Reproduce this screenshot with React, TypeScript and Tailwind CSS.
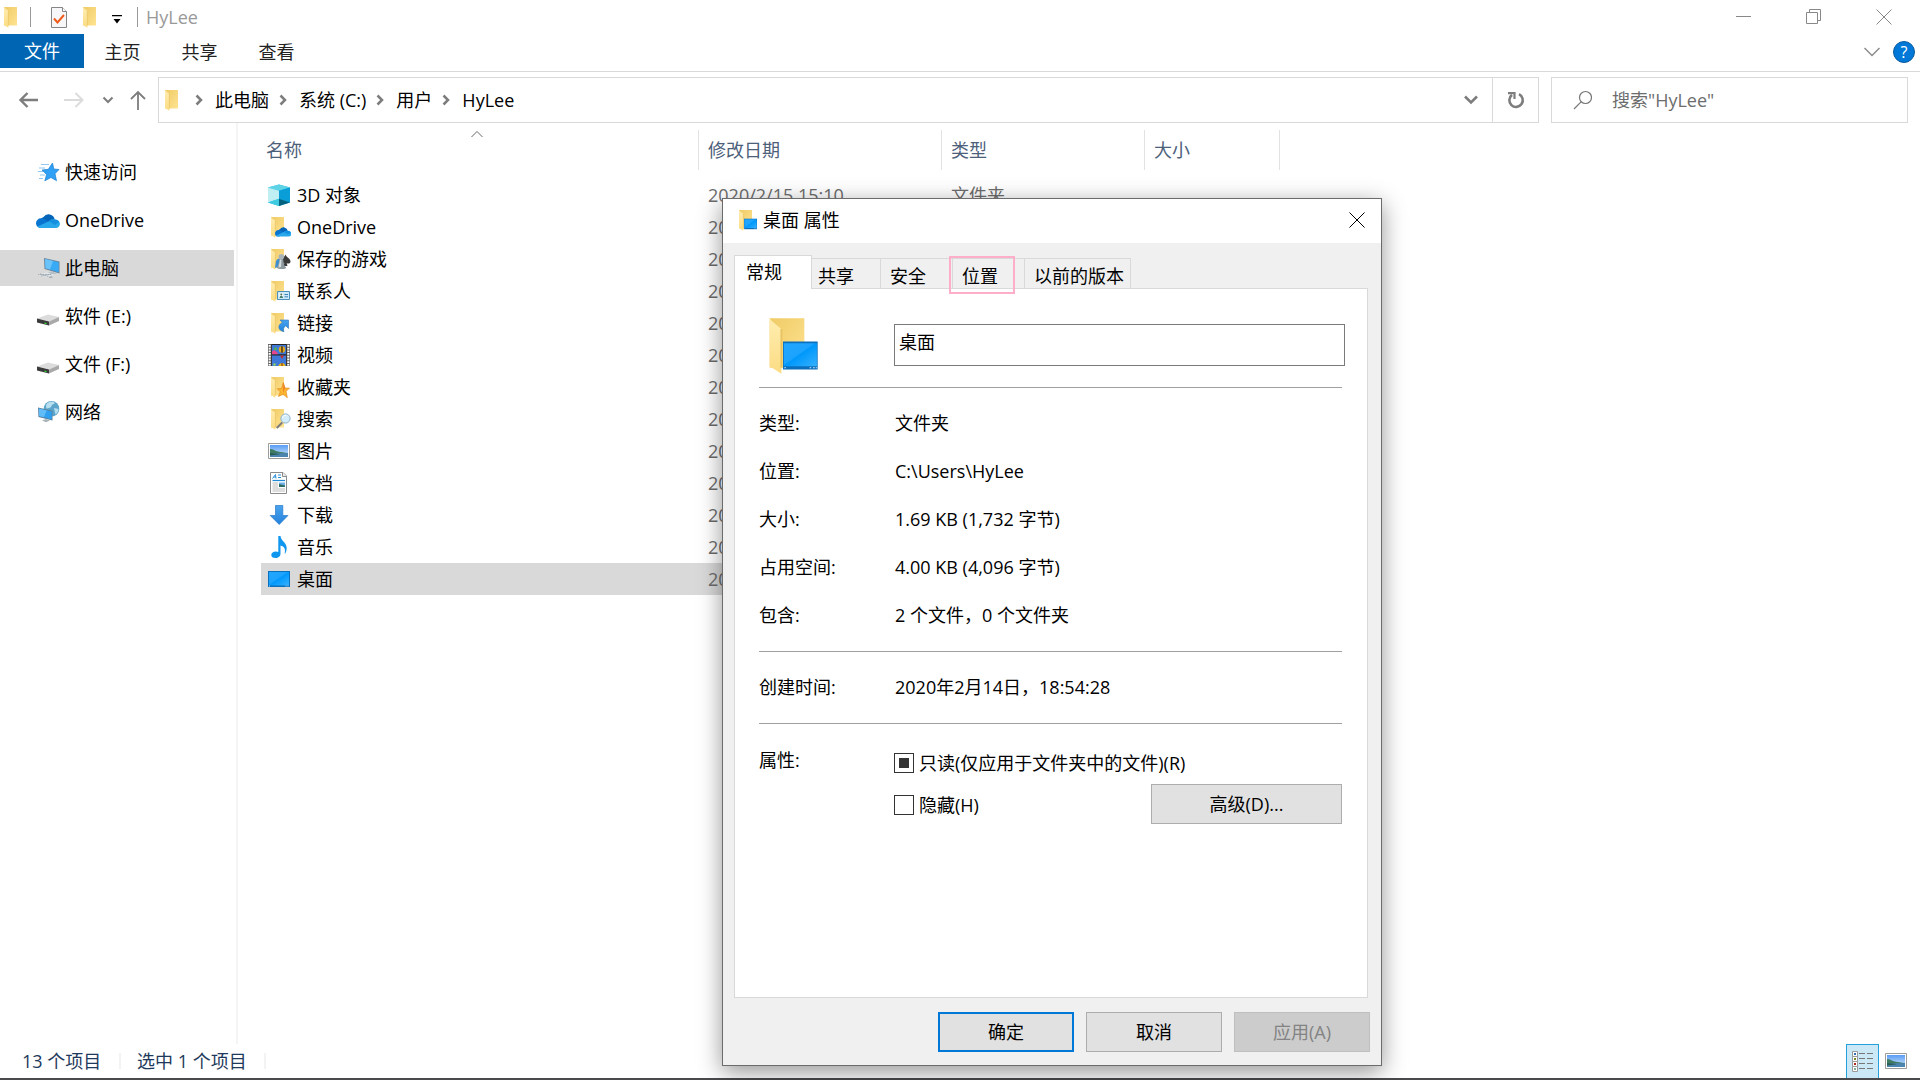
import { useEffect, useRef, type ReactNode } from "react";
import clsx from "clsx";

/* ---------- shared svg pieces ---------- */

function Gradients() {
    return (
        <svg width="0" height="0" className="absolute" aria-hidden="true">
            <defs>
                <linearGradient id="folderBack" x1="0" y1="0" x2="1" y2="1">
                    <stop offset="0" stopColor="#efcb66" />
                    <stop offset="1" stopColor="#ffe391" />
                </linearGradient>
                <linearGradient id="folderFlap" x1="0" y1="0" x2="0" y2="1">
                    <stop offset="0" stopColor="#ffedb0" />
                    <stop offset="1" stopColor="#fbdc83" />
                </linearGradient>
                <linearGradient id="screen" x1="0" y1="0" x2="1" y2="1">
                    <stop offset="0" stopColor="#23a7ff" />
                    <stop offset="0.45" stopColor="#1ca3fd" />
                    <stop offset="0.5" stopColor="#0098fb" />
                    <stop offset="1" stopColor="#35b1ff" />
                </linearGradient>
                <linearGradient id="sky" x1="0" y1="0" x2="0" y2="1">
                    <stop offset="0" stopColor="#5a9cf5" />
                    <stop offset="1" stopColor="#d4e9fb" />
                </linearGradient>
                <linearGradient id="arrowBlue" x1="0" y1="0" x2="0" y2="1">
                    <stop offset="0" stopColor="#4aa3ee" />
                    <stop offset="1" stopColor="#2382dc" />
                </linearGradient>
            </defs>
        </svg>
    );
}

function Svg({ children, className = "size-6" }: { children: ReactNode; className?: string }) {
    return (
        <svg viewBox="0 0 24 24" className={clsx("shrink-0", className)} aria-hidden="true">
            {children}
        </svg>
    );
}

function FolderShape() {
    return (
        <>
            <path d="M4 2h13v18.5H4z" fill="url(#folderBack)" />
            <path d="M4 2l1 1.2L8.4 6v16.8L4 20z" fill="url(#folderFlap)" />
            <path d="M8.4 6v14.5" stroke="#e9c362" strokeWidth="0.7" />
        </>
    );
}

function CloudShape() {
    return (
        <>
            <path d="M7.5 9a6.2 6.2 0 0 1 11.2 2.500L12 16 5 10.500z" fill="#0364b8" />
            <path d="M0 15.500a5 5 0 0 1 5.300-5.200c1.600 0 2.600.5 3.400 1L15 15l-9 5H5a4.700 4.700 0 0 1-5-4.500z" fill="#0a74d1" />
            <path d="M13 13.200c1.500-1.500 3.500-2.200 5.700-1.700A4.900 4.900 0 0 1 24 15.800 4.200 4.200 0 0 1 19.800 20H5c-1.500 0-2.700-.6-3.600-1.500z" fill="#28a8ea" />
            <path d="M13 13.200c1.500-1.500 3.500-2.200 5.700-1.700 1.800.2 3.500 1.100 4.500 2.500L19 17z" fill="#1490df" />
        </>
    );
}

function DesktopShape() {
    return (
        <>
            <path d="M1 4h22v16H1z" fill="#0a6fbd" />
            <path d="M2 5h20v13.500H2z" fill="url(#screen)" />
            <path d="M2 19h1M18.500 19h1M20.500 19h1" stroke="#cfe9ff" strokeWidth="0.8" />
        </>
    );
}

function PictureShape() {
    return (
        <>
            <path d="M1.500 4.500h21v15h-21z" fill="#fff" stroke="#9c9c9c" />
            <path d="M3 6h18v12H3z" fill="url(#sky)" />
            <path d="M3 10c3 0 5 2 8 2.500s6 1 10 1.500v1H3z" fill="#3f7a63" />
            <path d="M3 14.200h18V18H3z" fill="#4c86b0" />
            <path d="M3 14c4 .2 7 .8 10 1.200L3 16.500z" fill="#2b5c53" />
        </>
    );
}

function FolderIcon({ className }: { className?: string }) {
    return (
        <Svg className={className}>
            <FolderShape />
        </Svg>
    );
}

function DesktopFolderIcon({ className }: { className?: string }) {
    return (
        <Svg className={className}>
            <FolderShape />
            <path d="M9 10.700h13v10.500H9z" fill="#0a6fbd" />
            <path d="M9.300 11.300h12.400v8.700H9.300z" fill="url(#screen)" />
            <path d="M9.500 20.500h.6M19 20.500h.6M20.300 20.500h.6M21.300 20.500h.4" stroke="#cfe9ff" strokeWidth="0.4" />
        </Svg>
    );
}

const icons: Record<string, ReactNode> = {
    cube: (
        <Svg>
            <path d="M12 1.500l11 3v15l-11 3.500-11-3.500v-15z" fill="#19b9dc" />
            <path d="M1 4.500l11-3 11 3-11 3.300z" fill="#5fd3e6" />
            <path d="M1 4.500l11 3.300v8L1 19.500z" fill="#bfeef3" />
            <path d="M12 7.800l11-3.300v15l-11-3.700z" fill="#0a9ed8" />
            <path d="M1 19.500l11-3.700V23z" fill="#3fcbe0" />
            <path d="M12 15.800l11 3.700L12 23z" fill="#04627f" />
        </Svg>
    ),
    onedriveFolder: (
        <Svg>
            <FolderShape />
            <g transform="translate(8 8) scale(.68)">
                <CloudShape />
            </g>
        </Svg>
    ),
    games: (
        <Svg>
            <FolderShape />
            <path d="M9 14c1-2 3-3 4-2l-2 8-3 1z" fill="#3d8fd1" />
            <path d="M18.500 7.500c1 3 5 4 5 7 0 2-2.300 2.600-3.800 1.500l.8 3h-4l.8-3c-1.500 1.100-3.800.5-3.800-1.500 0-3 4-4 5-7z" fill="#3b3b3b" />
            <circle cx="14.300" cy="9.800" r="2.800" fill="#aab4b8" />
            <path d="M12.500 12h3.600l1 6 2 2.500c.5 2-8.500 2-9.500 0l2-2.500z" fill="#8c999f" />
            <path d="M13 12.500h1.500l-.5 7.500-2.500.5z" fill="#d5dcdf" />
        </Svg>
    ),
    contacts: (
        <Svg>
            <FolderShape />
            <path d="M10.500 12.500h12v8h-12z" fill="#cdeafa" stroke="#4a90bd" />
            <path d="M12.500 14.500h3.500v4.500h-3.500z" fill="#fff" />
            <circle cx="14.300" cy="15.600" r="1" fill="#4b6b5d" />
            <path d="M12.600 19c0-3 3.400-3 3.400 0z" fill="#3f7f6a" />
            <path d="M17.500 15.500H21M17.500 17.800H21" stroke="#3c83b5" />
        </Svg>
    ),
    links: (
        <Svg>
            <FolderShape />
            <path d="M13 9h8.500v8.500l-2.800-2.800c-2.300 1.800-2.700 3.800-1.700 6-3.800-.7-6-3.200-4.800-6.200.6-1.500 2-2.400 3.300-3z" fill="url(#arrowBlue)" stroke="#2a74bd" strokeWidth="0.6" />
        </Svg>
    ),
    video: (
        <Svg>
            <path d="M1 1h22v22H1z" fill="#6a6a6a" />
            <path d="M2.700 2v21M21.300 2v21" stroke="#fff" strokeWidth="2" strokeDasharray="1.700 1" />
            <path d="M4.300 1h15.400v22H4.300z" fill="#252525" />
            <path d="M5 2h14v9.300H5zM5 12.500h14V23H5z" fill="#3e78d8" />
            <circle cx="15" cy="6.500" r="3.200" fill="#e2a91d" />
            <path d="M14.300 3.300h1.400v6.400h-1.400z" fill="#3d2a1b" />
            <path d="M5 8.500l2-1.500 3 2 1 2.300H5z" fill="#e5468d" />
            <circle cx="8.500" cy="5.800" r="1.500" fill="#55b04d" />
            <path d="M13 12.500h4l-2 3.500z" fill="#c22f2a" />
            <path d="M11.500 23c.5-4 6.500-4 7 0z" fill="#e7b71c" />
            <path d="M14.500 20h1v3h-1z" fill="#7a241d" />
            <circle cx="7.500" cy="21.500" r="1.300" fill="#8fcf5a" />
        </Svg>
    ),
    favorites: (
        <Svg>
            <FolderShape />
            <path d="M16.300 7.500l1.700 5.500 4.500.2-3.500 3 1.300 6.500-4.300-3.700-4.500 2.500 1.800-4.700-3-3 4.200-.3z" fill="#fdb62f" stroke="#e08a1b" strokeWidth="0.7" />
            <path d="M16.300 7.500l1.700 5.500-2 5.500z" fill="#f07f2a" />
        </Svg>
    ),
    search: (
        <Svg>
            <FolderShape />
            <path d="M15.200 15.500l-5.500 5.500" stroke="#7d7d7d" strokeWidth="2" />
            <circle cx="18.500" cy="11.500" r="4.600" fill="#d3ecfb" stroke="#8fb3cc" />
            <path d="M15.500 11a3.200 3.200 0 0 1 4-2.500" stroke="#fff" fill="none" />
        </Svg>
    ),
    pictures: (
        <Svg>
            <PictureShape />
        </Svg>
    ),
    documents: (
        <Svg>
            <path d="M3.500 1.500h12.500l3.500 3.500v17.500h-16z" fill="#fff" stroke="#8a8a8a" />
            <path d="M15.500 1.500V5.500h4" fill="#eee" stroke="#8a8a8a" />
            <path d="M5.500 7.500l3-4 .5 4M6.500 6h2.500M11 4h3M11 6.500h3" stroke="#2b8fd8" fill="none" />
            <path d="M5.500 9.500h12.500" stroke="#1e88d6" strokeWidth="1.200" />
            <path d="M5.500 12h5.500M5.500 14h5.500M5.500 16h5.500M5.500 18h12.500M5.500 20h12.500" stroke="#a9a9a9" strokeWidth="0.800" />
            <path d="M12 11.500h6v4.500h-6z" fill="#6fb1e6" />
            <path d="M12 13l3 .8 3 .7V16h-6z" fill="#2f6b63" />
        </Svg>
    ),
    download: (
        <Svg>
            <path d="M8.500 2.500h7.300v10H21L12.200 21.500 3.200 12.500h5.300z" fill="url(#arrowBlue)" stroke="#2679c8" strokeWidth="0.700" />
        </Svg>
    ),
    music: (
        <Svg>
            <path d="M11.300 1h2.200c.3 3 2 4.300 3.900 6.500 2.600 3 3.100 6.700 1 10.800-.3.500-.9.300-.7-.3 1-3.700-.3-6.500-4.200-7.500v8.200c0 2.600-2.200 4.300-5 4.300-2.700 0-4.200-1.300-4.200-3 0-2 2-3.500 4.500-3.500 1 0 1.800.2 2.500.5z" fill="#0f96ee" />
        </Svg>
    ),
    desktop: (
        <Svg>
            <DesktopShape />
        </Svg>
    ),
    quick: (
        <Svg>
            <path d="M5 4.500h8M3 8h6M2 11.500h5M4 15h5M3 18.500h4" stroke="#8fc7f2" strokeWidth="1" />
            <path d="M16.500 3l1.300 6 5.200.5-4 4.200 1.500 7-5.500-3.200-6.200 3.300 1.800-6.300L6 10l6.300-.7z" fill="#2ea0f5" stroke="#1c7fd0" strokeWidth="0.700" />
        </Svg>
    ),
    onedrive: (
        <Svg>
            <CloudShape />
        </Svg>
    ),
    pc: (
        <Svg>
            <path d="M8 2l15.500 3.500v12L8.500 13z" fill="#68849a" />
            <path d="M9 3l13.700 3.200v10L9.500 12.200z" fill="#39aaf6" />
            <path d="M9 3l8 1.900-3 8.600-4.500-1.300z" fill="#6cc3fa" />
            <path d="M12 16.500l4-1 5 1.800-4 1.200z" fill="#b5bfc6" />
            <path d="M1 18.500l10-2 8 2.500-8 2.500z" fill="#dfe4e8" />
            <path d="M2 18.500l13 0M5 20l11-2M4 17.800l9 3" stroke="#8d99a2" strokeWidth="0.700" strokeDasharray="1.500 .8" />
            <path d="M12.500 21l3-.8 1.500 1-3 .8z" fill="#97a4ad" />
        </Svg>
    ),
    drive: (
        <Svg>
            <path d="M1 14.500L12 10.500l11 2.500-10 4.500z" fill="#dcdcdc" />
            <path d="M1 14.500L13 17.500v4L1 18.500z" fill="#3a3a3a" />
            <path d="M13 17.500l10-4.500v4L13 21.500z" fill="#a9a9a9" />
            <path d="M8.500 18.500l2 .5v1.200l-2-.5z" fill="#35d335" />
        </Svg>
    ),
    network: (
        <Svg>
            <circle cx="15.500" cy="8.800" r="7.800" fill="#5ba5cb" />
            <path d="M11 3.500c2-2 6-2.500 8-.5-1 1.500-3 1-3.500 3s-3 2-5 2.500c-.8-2-.5-3.800.5-5zM18 8l4.500 1c0 2-1 4-3 5.500z" fill="#b7dff0" />
            <path d="M2 7.500l14.500 3.300v9.700L2.500 17z" fill="#5c7f98" />
            <path d="M2.800 8.500l13 3v8L3.200 16z" fill="#2f9fee" />
            <path d="M2.800 8.500l8 1.900-3 6.800L3.200 16z" fill="#62bcf8" />
            <path d="M6 20.500l4-1.500 4 1.500-4 1.800z" fill="#a8b3ba" />
        </Svg>
    ),
};

function Chevron({ dir, className }: { dir: "down" | "right"; className?: string }) {
    return (
        <svg viewBox="0 0 12 12" className={clsx("size-3 shrink-0", className)} fill="none" stroke="currentColor" aria-hidden="true">
            <path d={dir === "down" ? "M1.500 3.500L6 8l4.500-4.500" : "M3.500 1.500L8 6l-4.500 4.500"} />
        </svg>
    );
}

/* ---------- data ---------- */

const places = [
    { icon: "quick", label: "快速访问" },
    { icon: "onedrive", label: "OneDrive" },
    { icon: "pc", label: "此电脑", active: true },
    { icon: "drive", label: "软件 (E:)" },
    { icon: "drive", label: "文件 (F:)" },
    { icon: "network", label: "网络" },
];

const files = [
    { icon: "cube", name: "3D 对象", date: "2020/2/15 15:10", type: "文件夹" },
    { icon: "onedriveFolder", name: "OneDrive", date: "2020" },
    { icon: "games", name: "保存的游戏", date: "2020" },
    { icon: "contacts", name: "联系人", date: "2020" },
    { icon: "links", name: "链接", date: "2020" },
    { icon: "video", name: "视频", date: "2020" },
    { icon: "favorites", name: "收藏夹", date: "2020" },
    { icon: "search", name: "搜索", date: "2020" },
    { icon: "pictures", name: "图片", date: "2020" },
    { icon: "documents", name: "文档", date: "2020" },
    { icon: "download", name: "下载", date: "2020" },
    { icon: "music", name: "音乐", date: "2020" },
    { icon: "desktop", name: "桌面", date: "2020", selected: true },
];

const details = [
    ["类型:", "文件夹"],
    ["位置:", "C:\\Users\\HyLee"],
    ["大小:", "1.69 KB (1,732 字节)"],
    ["占用空间:", "4.00 KB (4,096 字节)"],
    ["包含:", "2 个文件，0 个文件夹"],
];

/* ---------- explorer window ---------- */

function TitleBar() {
    return (
        <header className="flex h-[34px] items-center text-[#999]">
            <FolderIcon className="size-6" />
            <span className="ml-1.5 h-5 w-px bg-[#999]" />
            <button aria-label="属性" className="ml-4 flex size-6 items-center justify-center">
                <svg viewBox="0 0 18 24" className="h-6" aria-hidden="true">
                    <path d="M1.500 2.500h11l4 4v16h-15z" fill="#f7f7f9" stroke="#858585" />
                    <path d="M12.500 2.500v4h4" fill="#fff" stroke="#858585" />
                    <path d="M4 13.500l3.500 4L14 10" fill="none" stroke="#f05a1a" strokeWidth="2" />
                </svg>
            </button>
            <button aria-label="新建文件夹" className="ml-2 flex size-6">
                <FolderIcon />
            </button>
            <button aria-label="自定义快速访问工具栏" className="ml-1.5 flex size-4 items-center justify-center pt-1">
                <svg viewBox="0 0 10 9" className="w-[10px]" aria-hidden="true">
                    <path d="M0 0h10v1.300H0zM1.500 4h7L5 8.500z" fill="#000" />
                </svg>
            </button>
            <span className="ml-3 h-5 w-px bg-[#999]" />
            <h1 className="ml-2 text-lg leading-6">HyLee</h1>
            <div className="ml-auto flex items-center gap-[54px] pr-7 text-[#888]">
                <button aria-label="最小化">
                    <svg viewBox="0 0 16 16" className="size-4" stroke="currentColor">
                        <path d="M0 7.500h15" />
                    </svg>
                </button>
                <button aria-label="还原">
                    <svg viewBox="0 0 16 16" className="size-4" stroke="currentColor" fill="none">
                        <path d="M.5 3.500h11v11H.5zM3.500 3.500v-3h11v11h-3" />
                    </svg>
                </button>
                <button aria-label="关闭">
                    <svg viewBox="0 0 16 16" className="size-4" stroke="currentColor">
                        <path d="M.5.5l15 15M15.500.5l-15 15" />
                    </svg>
                </button>
            </div>
        </header>
    );
}

function Ribbon() {
    return (
        <nav className="flex h-[38px] items-start border-b border-[#d9d9d9] text-lg text-[#222]">
            <button className="h-[34px] w-[84px] bg-[#0066b4] text-white">文件</button>
            {["主页", "共享", "查看"].map((tab) => (
                <button key={tab} className="h-9 w-[77px]">
                    {tab}
                </button>
            ))}
            <div className="ml-auto flex h-9 items-center gap-3 pr-[5px]">
                <button aria-label="展开功能区" className="text-[#8c8c8c]">
                    <svg viewBox="0 0 18 10" className="w-[18px]" fill="none" stroke="currentColor" strokeWidth="1.500">
                        <path d="M1.500 1L9 8.500 16.500 1" />
                    </svg>
                </button>
                <button
                    aria-label="帮助"
                    className="flex size-[22px] items-center justify-center rounded-full border border-[#0a5a9f] bg-[#0078d7] text-base leading-5 text-white"
                >
                    ?
                </button>
            </div>
        </nav>
    );
}

function AddressBar() {
    return (
        <div className="flex h-[51px] items-end">
            <div className="flex h-[46px] w-[158px] shrink-0 items-center text-[#7d7d7d]">
                <button aria-label="后退" className="ml-[18px]">
                    <svg viewBox="0 0 20 20" className="size-5" fill="none" stroke="currentColor" strokeWidth="2.400">
                        <path d="M20 10H3M9.500 3L2.500 10l7 7" />
                    </svg>
                </button>
                <button aria-label="前进" className="ml-[26px] text-[#dcdcdc]" disabled>
                    <svg viewBox="0 0 20 20" className="size-5" fill="none" stroke="currentColor" strokeWidth="2">
                        <path d="M0 10h18M11.500 3l7 7-7 7" />
                    </svg>
                </button>
                <button aria-label="最近浏览的位置" className="ml-[18px]">
                    <Chevron dir="down" className="stroke-2" />
                </button>
                <button aria-label="上移" className="ml-[14px]">
                    <svg viewBox="0 0 20 20" className="size-5" fill="none" stroke="currentColor" strokeWidth="1.800">
                        <path d="M10 20V2M3 9L10 2l7 7" />
                    </svg>
                </button>
            </div>
            <div className="flex h-[46px] flex-1 items-center border border-[#d9d9d9] text-lg text-black">
                <FolderIcon className="ml-0.5 size-6" />
                {["此电脑", "系统 (C:)", "用户", "HyLee"].map((crumb) => (
                    <span key={crumb} className="flex items-center">
                        <Chevron dir="right" className="mr-2.5 ml-2 stroke-[2.5] text-[#7d7d7d]" />
                        <a href="#" className="leading-6">
                            {crumb}
                        </a>
                    </span>
                ))}
                <button aria-label="以前的位置" className="mr-[14px] ml-auto text-[#7d7d7d]">
                    <svg viewBox="0 0 14 10" className="w-[14px]" fill="none" stroke="currentColor" strokeWidth="2.600">
                        <path d="M1 1.500l6 6 6-6" />
                    </svg>
                </button>
                <button aria-label="刷新" className="flex h-full w-[46px] items-center justify-center border-l border-[#d9d9d9] text-[#7d7d7d]">
                    <svg viewBox="0 0 18 18" className="size-[18px]" fill="none" stroke="currentColor" strokeWidth="2.600">
                        <path d="M12 3.200a6.700 6.700 0 1 1-7 .7" />
                        <path d="M1 2.200h6.500V8" strokeWidth="2.200" />
                    </svg>
                </button>
            </div>
            <label className="mr-3 ml-3 flex h-[46px] w-[357px] items-center border border-[#d9d9d9] pl-5 text-lg">
                <svg viewBox="0 0 20 20" className="size-5 shrink-0 text-[#777]" fill="none" stroke="currentColor" strokeWidth="1.200">
                    <circle cx="13.500" cy="7.500" r="6" />
                    <path d="M9.300 11.700L2 19" />
                </svg>
                <input
                    type="search"
                    aria-label="搜索"
                    placeholder={'搜索"HyLee"'}
                    className="ml-5 w-full min-w-0 bg-transparent outline-none placeholder:text-[#6d6d6d]"
                />
            </label>
        </div>
    );
}

function Sidebar() {
    return (
        <nav className="w-[238px] shrink-0 border-r-2 border-[#f5f5f5] pt-[31px]">
            <ul className="flex flex-col gap-3">
                {places.map((place) => (
                    <li key={place.label}>
                        <a
                            href="#"
                            className={clsx(
                                "mr-0.5 flex h-9 items-center gap-[5px] pl-9 text-lg text-black",
                                place.active && "bg-[#d9d9d9]"
                            )}
                        >
                            {icons[place.icon]}
                            {place.label}
                        </a>
                    </li>
                ))}
            </ul>
        </nav>
    );
}

function FileTable() {
    const head = "h-10 border-r border-[#e2e2e2] pl-[9px] text-left font-normal text-[#4c607a]";
    return (
        <main className="flex-1 pt-[7px] pl-[23px]">
            <table className="table-fixed border-separate border-spacing-0 text-lg leading-6">
                <colgroup>
                    <col className="w-[438px]" />
                    <col className="w-[243px]" />
                    <col className="w-[203px]" />
                    <col className="w-[135px]" />
                </colgroup>
                <thead>
                    <tr>
                        <th className={clsx(head, "relative")}>
                            <svg viewBox="0 0 12 8" className="absolute top-0 left-[210px] w-3" fill="none" stroke="#666">
                                <path d="M.5 7L6 1.500 11.500 7" />
                            </svg>
                            <span className="-ml-1">名称</span>
                        </th>
                        <th className={head}>修改日期</th>
                        <th className={head}>类型</th>
                        <th className={head}>大小</th>
                    </tr>
                </thead>
                <tbody className="before:block before:h-[9px]">
                    {files.map((file) => (
                        <tr key={file.name} className={clsx("text-[#6d6d6d]", file.selected && "bg-[#d9d9d9]")}>
                            <td className="h-8 pl-1.5 text-black">
                                <div className="flex items-center gap-[6px]">
                                    {icons[file.icon]}
                                    {file.name}
                                </div>
                            </td>
                            <td className="pl-[9px]">{file.date}</td>
                            <td className="pl-[9px]">{file.type}</td>
                            <td />
                        </tr>
                    ))}
                </tbody>
            </table>
        </main>
    );
}

function StatusBar() {
    return (
        <footer className="flex h-9 items-center border-b-2 border-[#4a4a4d] pl-[22px] text-lg leading-6 text-[#1e395b]">
            <span className="w-[97px]">13 个项目</span>
            <span className="mr-4 h-4 w-0.5 bg-[#f3f3f3]" />
            <span className="w-[127px]">选中 1 个项目</span>
            <span className="h-4 w-0.5 bg-[#f3f3f3]" />
            <div className="ml-auto flex h-full items-center gap-[5px] pr-3">
                <button aria-label="详细信息" className="flex h-full w-[33px] items-center justify-center border border-b-0 border-[#26a0da] bg-[#cbe8f6]">
                    <svg viewBox="0 0 22 22" className="size-[22px]">
                        {[0.5, 5.5, 10.5, 15.5].map((y, i) => (
                            <g key={y}>
                                <path d={`M.5 ${y}h5v5h-5z`} fill="#fff" stroke="#9a9a9a" />
                                <path d={`M2 ${y + 1.5}h2v2H2z`} fill={["#2f6fb5", "#7d8a2b", "#b52a1f", "#7fae9a"][i]} />
                                <path d={`M7 ${y + 2}h6M15 ${y + 2}h6`} stroke="#777" />
                            </g>
                        ))}
                    </svg>
                </button>
                <button aria-label="大缩略图">
                    <Svg>
                        <PictureShape />
                    </Svg>
                </button>
            </div>
        </footer>
    );
}

/* ---------- properties dialog ---------- */

function CheckBox({ id, label, mixed = false }: { id: string; label: string; mixed?: boolean }) {
    const ref = useRef<HTMLInputElement>(null);

    useEffect(() => {
        if (ref.current) ref.current.indeterminate = mixed;
    }, [mixed]);

    return (
        <div className="flex h-[42px] items-center gap-[5px]">
            <input
                ref={ref}
                id={id}
                type="checkbox"
                className="grid size-5 appearance-none place-items-center border border-[#333] bg-white before:size-[10px] before:content-[''] checked:before:bg-[#333] indeterminate:before:bg-[#333]"
            />
            <label htmlFor={id}>{label}</label>
        </div>
    );
}

function Tabs() {
    const tab = "relative h-[30px] border-t border-r border-[#d9d9d9] pt-1 text-left";
    return (
        <div role="tablist" className="flex h-[33px] items-end">
            <button role="tab" aria-selected="true" className="relative z-10 -mb-px h-[34px] w-[78px] border border-b-0 border-[#d9d9d9] bg-white pb-0.5 pl-[11px] text-left">
                常规
            </button>
            <button role="tab" className={clsx(tab, "w-[69px] pl-1.5")}>
                共享
            </button>
            <button role="tab" className={clsx(tab, "w-[72px] pl-[9px]")}>
                安全
            </button>
            <button role="tab" className={clsx(tab, "w-[72px] pl-[9px]")}>
                位置
                <span className="absolute -top-[3px] -left-[4px] h-[38px] w-[66px] border-2 border-[#ffaec9]" />
            </button>
            <button role="tab" className={clsx(tab, "w-[106px] pl-[9px]")}>
                以前的版本
            </button>
        </div>
    );
}

function PropertiesDialog() {
    const button = "h-10 border border-[#adadad] bg-[#e1e1e1]";
    return (
        <section
            role="dialog"
            aria-labelledby="dialog-title"
            className="absolute top-[198px] left-[722px] z-20 flex h-[868px] w-[660px] flex-col border border-[#6b6b6b] bg-[#f0f0f0] text-lg leading-6 text-black shadow-[0_6px_22px_rgba(0,0,0,0.42)]"
        >
            <div className="flex h-11 shrink-0 items-center bg-white pr-4 pb-0.5 pl-3">
                <DesktopFolderIcon className="size-6" />
                <h2 id="dialog-title" className="ml-1">
                    桌面 属性
                </h2>
                <button aria-label="关闭" className="ml-auto">
                    <svg viewBox="0 0 16 16" className="size-4" stroke="#000">
                        <path d="M.5.5l15 15M15.500.5l-15 15" />
                    </svg>
                </button>
            </div>
            <div className="flex flex-1 flex-col pt-3 pr-[11px] pb-[13px] pl-[11px]">
                <Tabs />
                <div className="mr-0.5 flex-1 border border-[#d9d9d9] bg-white pr-[25px] pl-6">
                    <div className="flex h-[98px] items-center pt-[14px]">
                        <div className="w-[135px]">
                            <DesktopFolderIcon className="size-16" />
                        </div>
                        <input
                            aria-label="名称"
                            defaultValue="桌面"
                            className="-mr-[3px] h-[42px] flex-1 border border-[#7a7a7a] pb-2 pl-1"
                        />
                    </div>
                    <hr className="border-[#a0a0a0]" />
                    <dl className="pt-[11px] pb-3">
                        {details.map(([term, value]) => (
                            <div key={term} className="flex h-12 items-center">
                                <dt className="w-[136px]">{term}</dt>
                                <dd>{value}</dd>
                            </div>
                        ))}
                    </dl>
                    <hr className="border-[#a0a0a0]" />
                    <dl className="pt-[11px] pb-3">
                        <div className="flex h-12 items-center">
                            <dt className="w-[136px]">创建时间:</dt>
                            <dd>2020年2月14日，18:54:28</dd>
                        </div>
                    </dl>
                    <hr className="border-[#a0a0a0]" />
                    <div className="flex pt-[18px]">
                        <span className="w-[135px] pt-1.5">属性:</span>
                        <div className="flex-1">
                            <CheckBox id="readonly" label="只读(仅应用于文件夹中的文件)(R)" mixed />
                            <div className="flex justify-between">
                                <CheckBox id="hidden" label="隐藏(H)" />
                                <button className={clsx(button, "w-[191px]")}>高级(D)...</button>
                            </div>
                        </div>
                    </div>
                </div>
                <div className="mt-[14px] flex justify-end gap-3">
                    <button className="h-10 w-[136px] border-2 border-[#0078d7] bg-[#e1e1e1]">确定</button>
                    <button className={clsx(button, "w-[136px]")}>取消</button>
                    <button disabled className="h-10 w-[136px] border border-[#bfbfbf] bg-[#cccccc] text-[#838383]">
                        应用(A)
                    </button>
                </div>
            </div>
        </section>
    );
}

export default function App() {
    return (
        <div className="relative flex min-h-screen flex-col overflow-hidden bg-white font-['Open_Sans','Noto_Sans_CJK_SC',sans-serif]">
            <Gradients />
            <TitleBar />
            <Ribbon />
            <AddressBar />
            <div className="flex flex-1">
                <Sidebar />
                <FileTable />
            </div>
            <StatusBar />
            <PropertiesDialog />
        </div>
    );
}
